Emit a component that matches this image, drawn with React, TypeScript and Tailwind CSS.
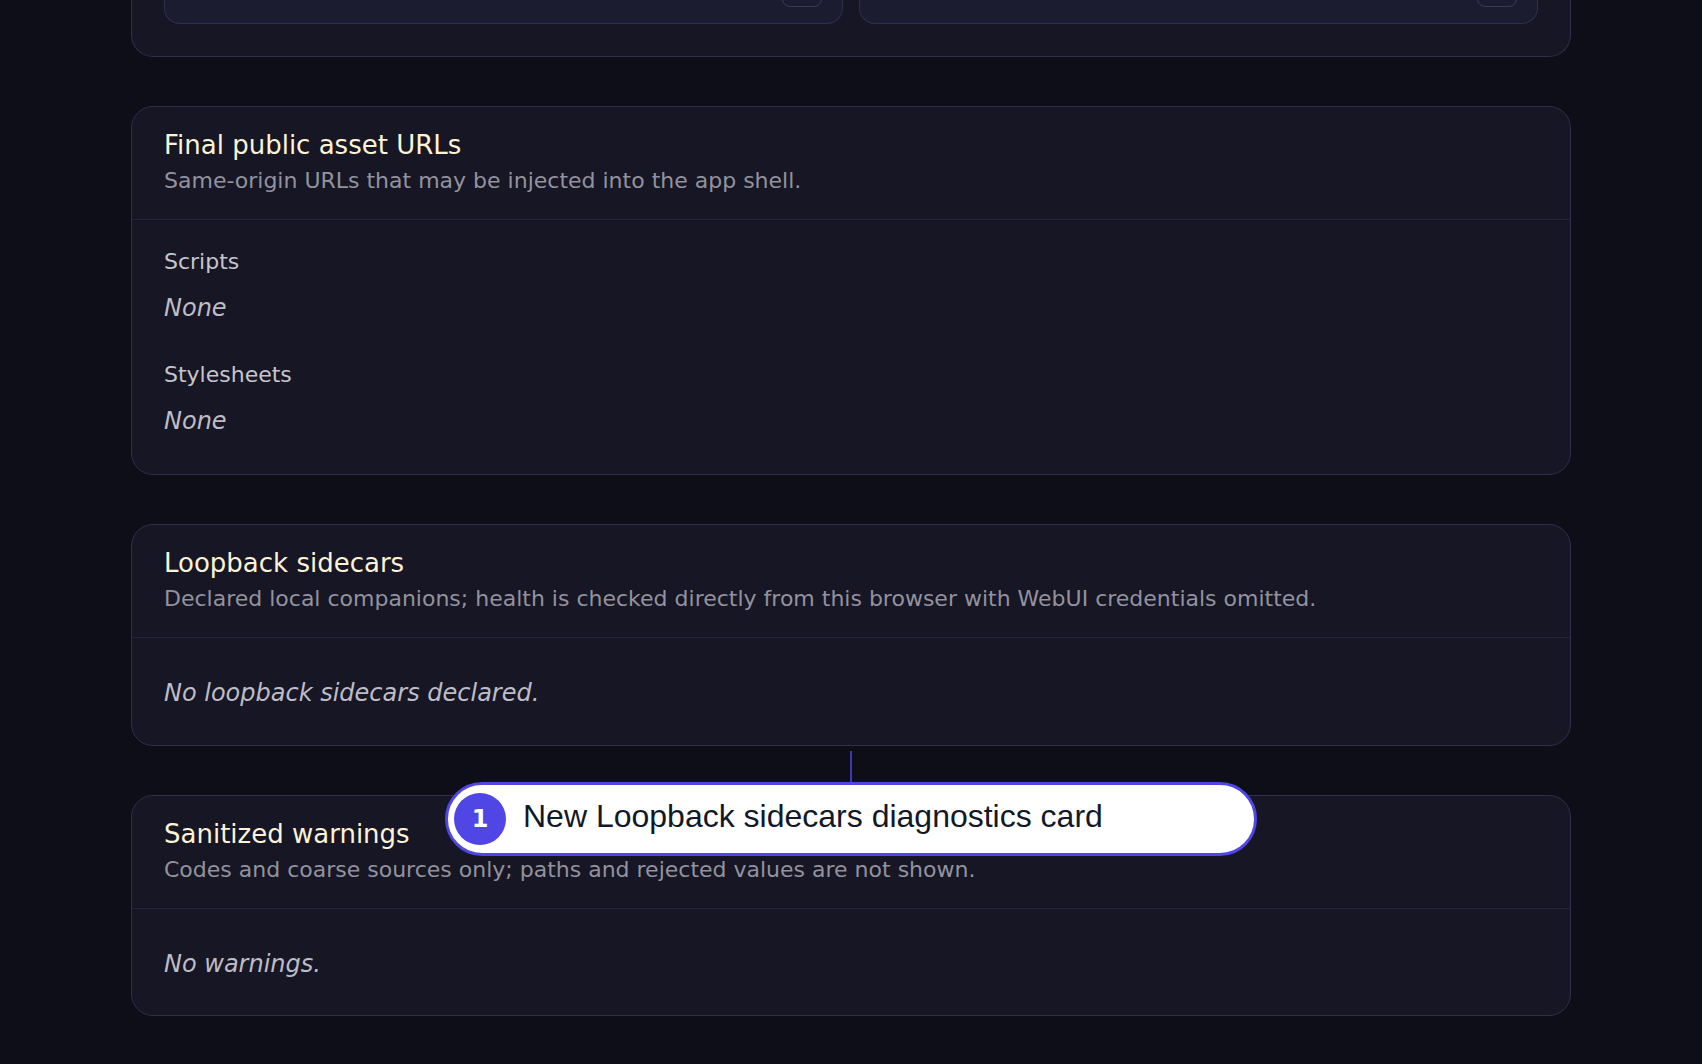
import React from "react";

function CardHeader({ title, subtitle }: { title: string; subtitle: string }) {
  return (
    <div className="px-8 py-5 border-b border-[#25233a]">
      <div className="text-[26px] leading-[36px] text-[#fcf3d6]">{title}</div>
      <div className="text-[22px] leading-[36px] text-[#93929e]">{subtitle}</div>
    </div>
  );
}

function Card({ children }: { children: React.ReactNode }) {
  return (
    <div className="rounded-[22px] border border-[#312d4d] bg-[#161624]">{children}</div>
  );
}

function SubCard() {
  return (
    <div className="h-[191px] rounded-b-[16px] border border-t-0 border-[#312e4b] bg-[#1b1c2f] flex items-end justify-end pr-5 pb-4">
      <div className="w-[40px] h-[36px] rounded-[8px] border border-[#3c3a52]" />
    </div>
  );
}

export default function App() {
  return (
    <div
      className="relative min-h-screen w-full overflow-hidden bg-[#0e0e19]"
      style={{ fontFamily: '"DejaVu Sans", sans-serif' }}
    >
      <div className="mx-auto w-[1440px] flex flex-col gap-[49px] pb-[60px]">
        {/* Top (partially visible) card */}
        <div className="-mt-[199px] rounded-b-[22px] border border-t-0 border-[#312d4d] bg-[#161624] px-8 pb-8 pt-8">
          <div className="grid grid-cols-2 gap-4">
            <SubCard />
            <SubCard />
          </div>
        </div>

        <Card>
          <CardHeader
            title="Final public asset URLs"
            subtitle="Same-origin URLs that may be injected into the app shell."
          />
          <div className="px-8 pt-6 pb-[35px]">
            <div className="text-[22px] leading-[36px] text-[#c6c5cd]">Scripts</div>
            <div className="mt-[10px] text-[24px] leading-[36px] italic text-[#bebdc7]">None</div>
            <div className="mt-[31px] text-[22px] leading-[36px] text-[#c6c5cd]">Stylesheets</div>
            <div className="mt-[10px] text-[24px] leading-[36px] italic text-[#bebdc7]">None</div>
          </div>
        </Card>

        <Card>
          <CardHeader
            title="Loopback sidecars"
            subtitle="Declared local companions; health is checked directly from this browser with WebUI credentials omitted."
          />
          <div className="px-8 pt-[37px] pb-[34px]">
            <div className="text-[24px] leading-[36px] italic text-[#bebdc7]">
              No loopback sidecars declared.
            </div>
          </div>
        </Card>

        <Card>
          <CardHeader
            title="Sanitized warnings"
            subtitle="Codes and coarse sources only; paths and rejected values are not shown."
          />
          <div className="px-8 pt-[37px] pb-[33px]">
            <div className="text-[24px] leading-[36px] italic text-[#bebdc7]">No warnings.</div>
          </div>
        </Card>
      </div>

      {/* Annotation connector */}
      <div className="absolute left-[850px] top-[751px] h-[31px] w-[2px] bg-[#4038b0]" />

      {/* Annotation bubble */}
      <div className="absolute left-[445px] top-[782px] flex h-[74px] w-[812px] items-center gap-[17px] rounded-full border-[3px] border-[#4f46e5] bg-white pl-[6px]">
        <div className="flex h-[52px] w-[52px] items-center justify-center rounded-full bg-[#4f46e5] text-[24px] font-bold text-white">
          1
        </div>
        <div
          className="mb-[6px] text-[32px] leading-none text-[#111827]"
          style={{ fontFamily: '"Liberation Sans", Arial, sans-serif' }}
        >
          New Loopback sidecars diagnostics card
        </div>
      </div>
    </div>
  );
}
